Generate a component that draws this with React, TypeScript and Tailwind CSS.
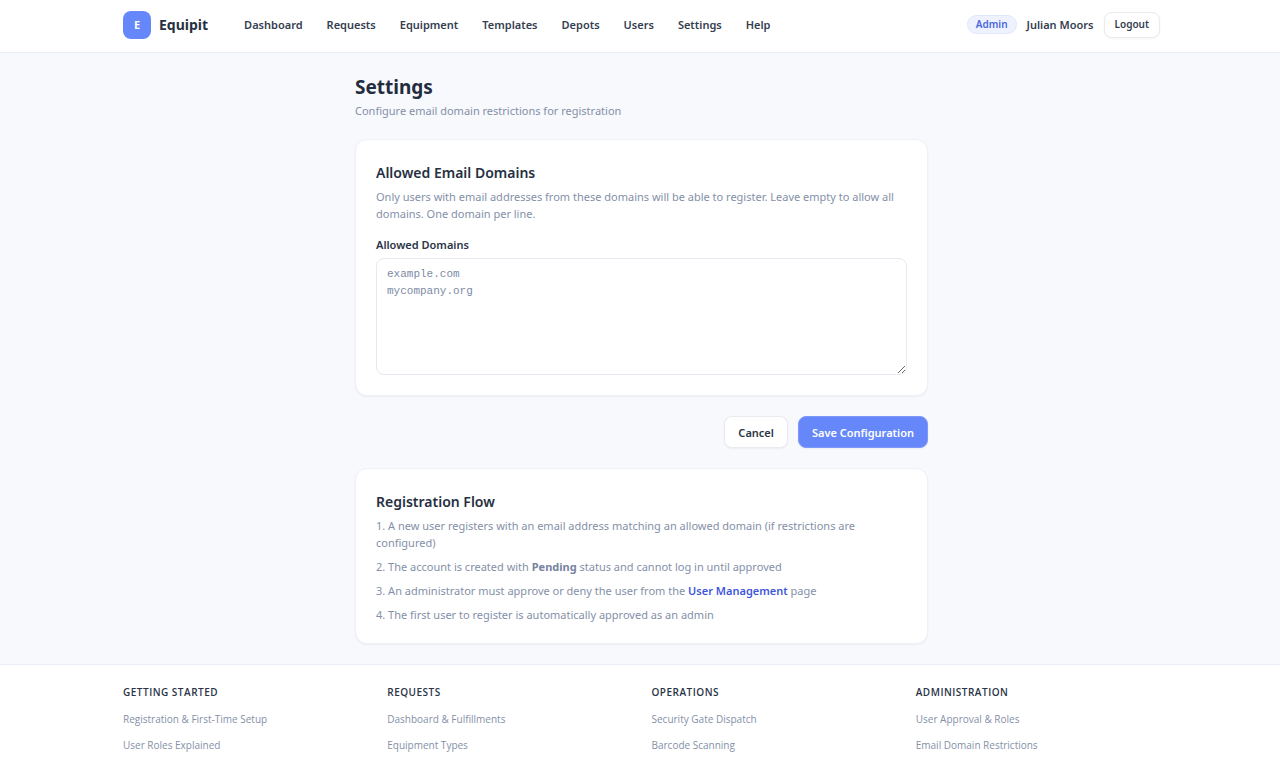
const navItems = ["Dashboard", "Requests", "Equipment", "Templates", "Depots", "Users", "Settings", "Help"];

const footerColumns = [
  { title: "Getting Started", links: ["Registration & First-Time Setup", "User Roles Explained"] },
  { title: "Requests", links: ["Dashboard & Fulfillments", "Equipment Types"] },
  { title: "Operations", links: ["Security Gate Dispatch", "Barcode Scanning"] },
  { title: "Administration", links: ["User Approval & Roles", "Email Domain Restrictions"] },
];

function Header() {
  return (
    <header className="border-b border-[#eaeef8] bg-white">
      <div className="mx-auto flex h-[52px] max-w-[1040px] items-center justify-between pb-[3px] pl-[3px]">
        <div className="flex items-center gap-9">
          <a href="#" className="flex items-center gap-2">
            <span className="flex size-7 items-center justify-center rounded-lg bg-[#6687fa] text-[11px] font-bold text-white">
              E
            </span>
            <span className="text-[14px] font-bold text-[#263042]">Equipit</span>
          </a>
          <nav className="flex items-center gap-6">
            {navItems.map((item) => (
              <a key={item} href="#" className="font-semibold text-[#343e50]">
                {item}
              </a>
            ))}
          </nav>
        </div>
        <div className="flex items-center gap-[10px]">
          <span className="rounded-full border border-[#dfe7fd] bg-[#edf2fe] px-2 text-[10px] leading-[17px] font-semibold text-[#4a66e0]">
            Admin
          </span>
          <span className="font-semibold text-[#343e50]">Julian Moors</span>
          <button
            type="button"
            className="h-[26px] rounded-lg border border-[#e9ebf0] bg-white px-[10px] text-[10px] font-semibold text-[#343e50] shadow-xs"
          >
            Logout
          </button>
        </div>
      </div>
    </header>
  );
}

function Card({ title, children }: { title: string; children: React.ReactNode }) {
  return (
    <section className="rounded-xl border border-[#eef1f8] bg-white p-5 shadow-xs">
      <h2 className="text-[14px] leading-[25px] font-semibold text-[#263042]">{title}</h2>
      {children}
    </section>
  );
}

export default function App() {
  return (
    <div className="min-h-screen bg-[#f8f9fd] font-['Noto_Sans','Open_Sans',sans-serif] text-[11px] leading-[17px] text-[#8490a8]">
      <Header />
      <main className="mx-auto max-w-[576px] py-5 pl-[3px]">
        <h1 className="text-[19px] leading-[29px] font-bold text-[#222c3d]">Settings</h1>
        <p>Configure email domain restrictions for registration</p>

        <form className="mt-5" onSubmit={(event) => event.preventDefault()}>
          <Card title="Allowed Email Domains">
            <p className="mt-[3px]">
              Only users with email addresses from these domains will be able to register. Leave empty to allow all
              domains. One domain per line.
            </p>
            <label htmlFor="domains" className="mt-[14px] block font-semibold text-[#2a3446]">
              Allowed Domains
            </label>
            <textarea
              id="domains"
              placeholder={"example.com\nmycompany.org"}
              className="mt-[5px] block h-[117px] w-full resize-y rounded-lg border border-[#e6e9ef] bg-white px-[10px] py-[7px] font-['Liberation_Mono',monospace] text-[11px] leading-[17px] text-[#2a3446] placeholder:text-[#7d8aa5]"
            />
          </Card>
          <div className="mt-5 flex justify-end gap-[10px]">
            <button
              type="button"
              className="h-8 rounded-lg border border-[#e9ebf0] bg-white px-[13px] font-semibold text-[#2a3446] shadow-xs"
            >
              Cancel
            </button>
            <button
              type="submit"
              className="h-8 rounded-lg border border-[#7d98fa] bg-[#6687fa] px-[13px] font-semibold text-white shadow-xs"
            >
              Save Configuration
            </button>
          </div>
        </form>

        <div className="mt-5">
          <Card title="Registration Flow">
            <div className="mt-[3px] flex flex-col gap-[7px]">
              <p>
                1. A new user registers with an email address matching an allowed domain (if restrictions are
                configured)
              </p>
              <p>
                2. The account is created with <strong className="font-bold text-[#7683a0]">Pending</strong> status and
                cannot log in until approved
              </p>
              <p>
                3. An administrator must approve or deny the user from the{" "}
                <a href="#" className="font-semibold text-[#3f57dc]">
                  User Management
                </a>{" "}
                page
              </p>
              <p>4. The first user to register is automatically approved as an admin</p>
            </div>
          </Card>
        </div>
      </main>
      <footer className="border-t border-[#eaeef8] bg-white">
        <div className="mx-auto grid max-w-[1040px] grid-cols-4 gap-5 pt-[19px] pb-1 pl-[3px] font-['Open_Sans','Noto_Sans',sans-serif]">
          {footerColumns.map((column) => (
            <section key={column.title}>
              <h3 className="text-[10px] font-semibold tracking-wider text-[#2a3446] uppercase">{column.title}</h3>
              <ul className="mt-[10px] flex flex-col gap-[9px] text-[10px]">
                {column.links.map((link) => (
                  <li key={link}>
                    <a href="#">{link}</a>
                  </li>
                ))}
              </ul>
            </section>
          ))}
        </div>
      </footer>
    </div>
  );
}
